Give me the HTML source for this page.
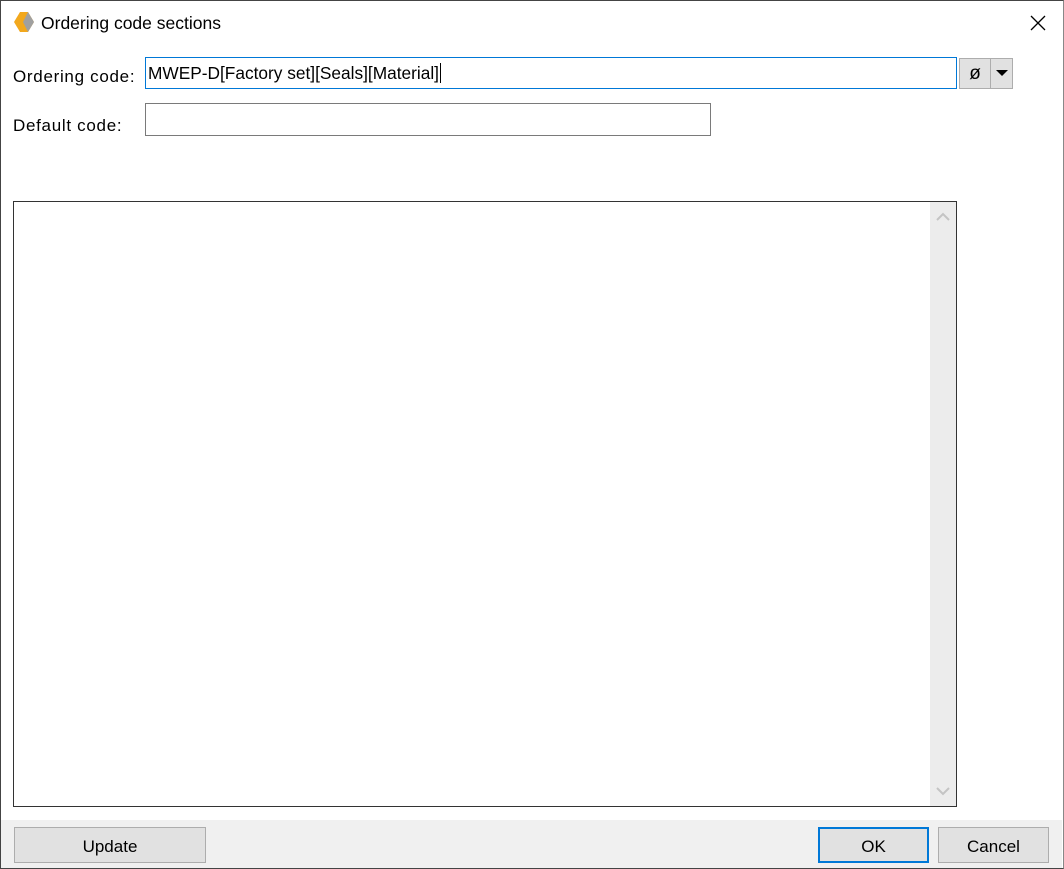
<!DOCTYPE html>
<html><head><style>
*{box-sizing:border-box;margin:0;padding:0}
body{width:1064px;height:869px;background:#fff;font-family:"Liberation Sans",sans-serif;font-size:16px;color:#000;position:relative;overflow:hidden}
.win{position:absolute;left:0;top:0;width:1064px;height:869px;border:1px solid #444;border-right-color:#888}
.a{position:absolute}
.lbl{font-size:17px;letter-spacing:0.7px}
.btn{position:absolute;background:#e1e1e1;border:1px solid #adadad;text-align:center;font-size:17px}
</style></head><body>
<div class="win"></div>
<svg class="a" style="left:12px;top:11px" width="24" height="24" viewBox="0 0 24 24">
<polygon points="8,1 16,1 22,11 16,21 8,21 2,11" fill="#f2a81d"/>
<polygon points="16,1 22,11 16,21 11,11" fill="#a0a0a0"/>
</svg>
<div class="a" style="left:41px;top:13px;font-size:17.5px">Ordering code sections</div>
<svg class="a" style="left:1030px;top:15px" width="16" height="16"><path d="M1 1L15 15M15 1L1 15" stroke="#000" stroke-width="1.3"/></svg>

<div class="a lbl" style="left:13px;top:67px">Ordering code:</div>
<div class="a" style="left:145px;top:57px;width:812px;height:32px;border:1px solid #0078d7;padding:5px 2px;font-size:17.3px;white-space:nowrap">MWEP-D[Factory set][Seals][Material]<span style="border-left:1px solid #000;margin-left:1px"></span></div>
<div class="btn" style="left:959px;top:58px;width:32px;height:31px;font-size:19px;line-height:29px">ø</div>
<div class="btn" style="left:990px;top:58px;width:23px;height:31px"><svg style="margin-top:10px" width="12" height="8"><polygon points="0,1 12,1 6,7" fill="#000"/></svg></div>

<div class="a lbl" style="left:13px;top:116px">Default code:</div>
<div class="a" style="left:145px;top:103px;width:566px;height:33px;border:1px solid #7a7a7a"></div>

<div class="a" style="left:13px;top:201px;width:944px;height:606px;border:1px solid #333"></div>
<div class="a" style="left:930px;top:202px;width:26px;height:604px;background:#ececec"></div>
<svg class="a" style="left:936px;top:212px" width="14" height="10"><path d="M1 8L7 2L13 8" stroke="#c4c4c4" stroke-width="2" fill="none"/></svg>
<svg class="a" style="left:936px;top:786px" width="14" height="10"><path d="M1 2L7 8L13 2" stroke="#c4c4c4" stroke-width="2" fill="none"/></svg>

<div class="a" style="left:1px;top:820px;width:1061px;height:48px;background:#f0f0f0"></div>
<div class="btn" style="left:14px;top:827px;width:192px;height:36px;line-height:37px">Update</div>
<div class="btn" style="left:818px;top:827px;width:111px;height:36px;line-height:35px;border:2px solid #0078d7">OK</div>
<div class="btn" style="left:938px;top:827px;width:111px;height:36px;line-height:37px">Cancel</div>
</body></html>
